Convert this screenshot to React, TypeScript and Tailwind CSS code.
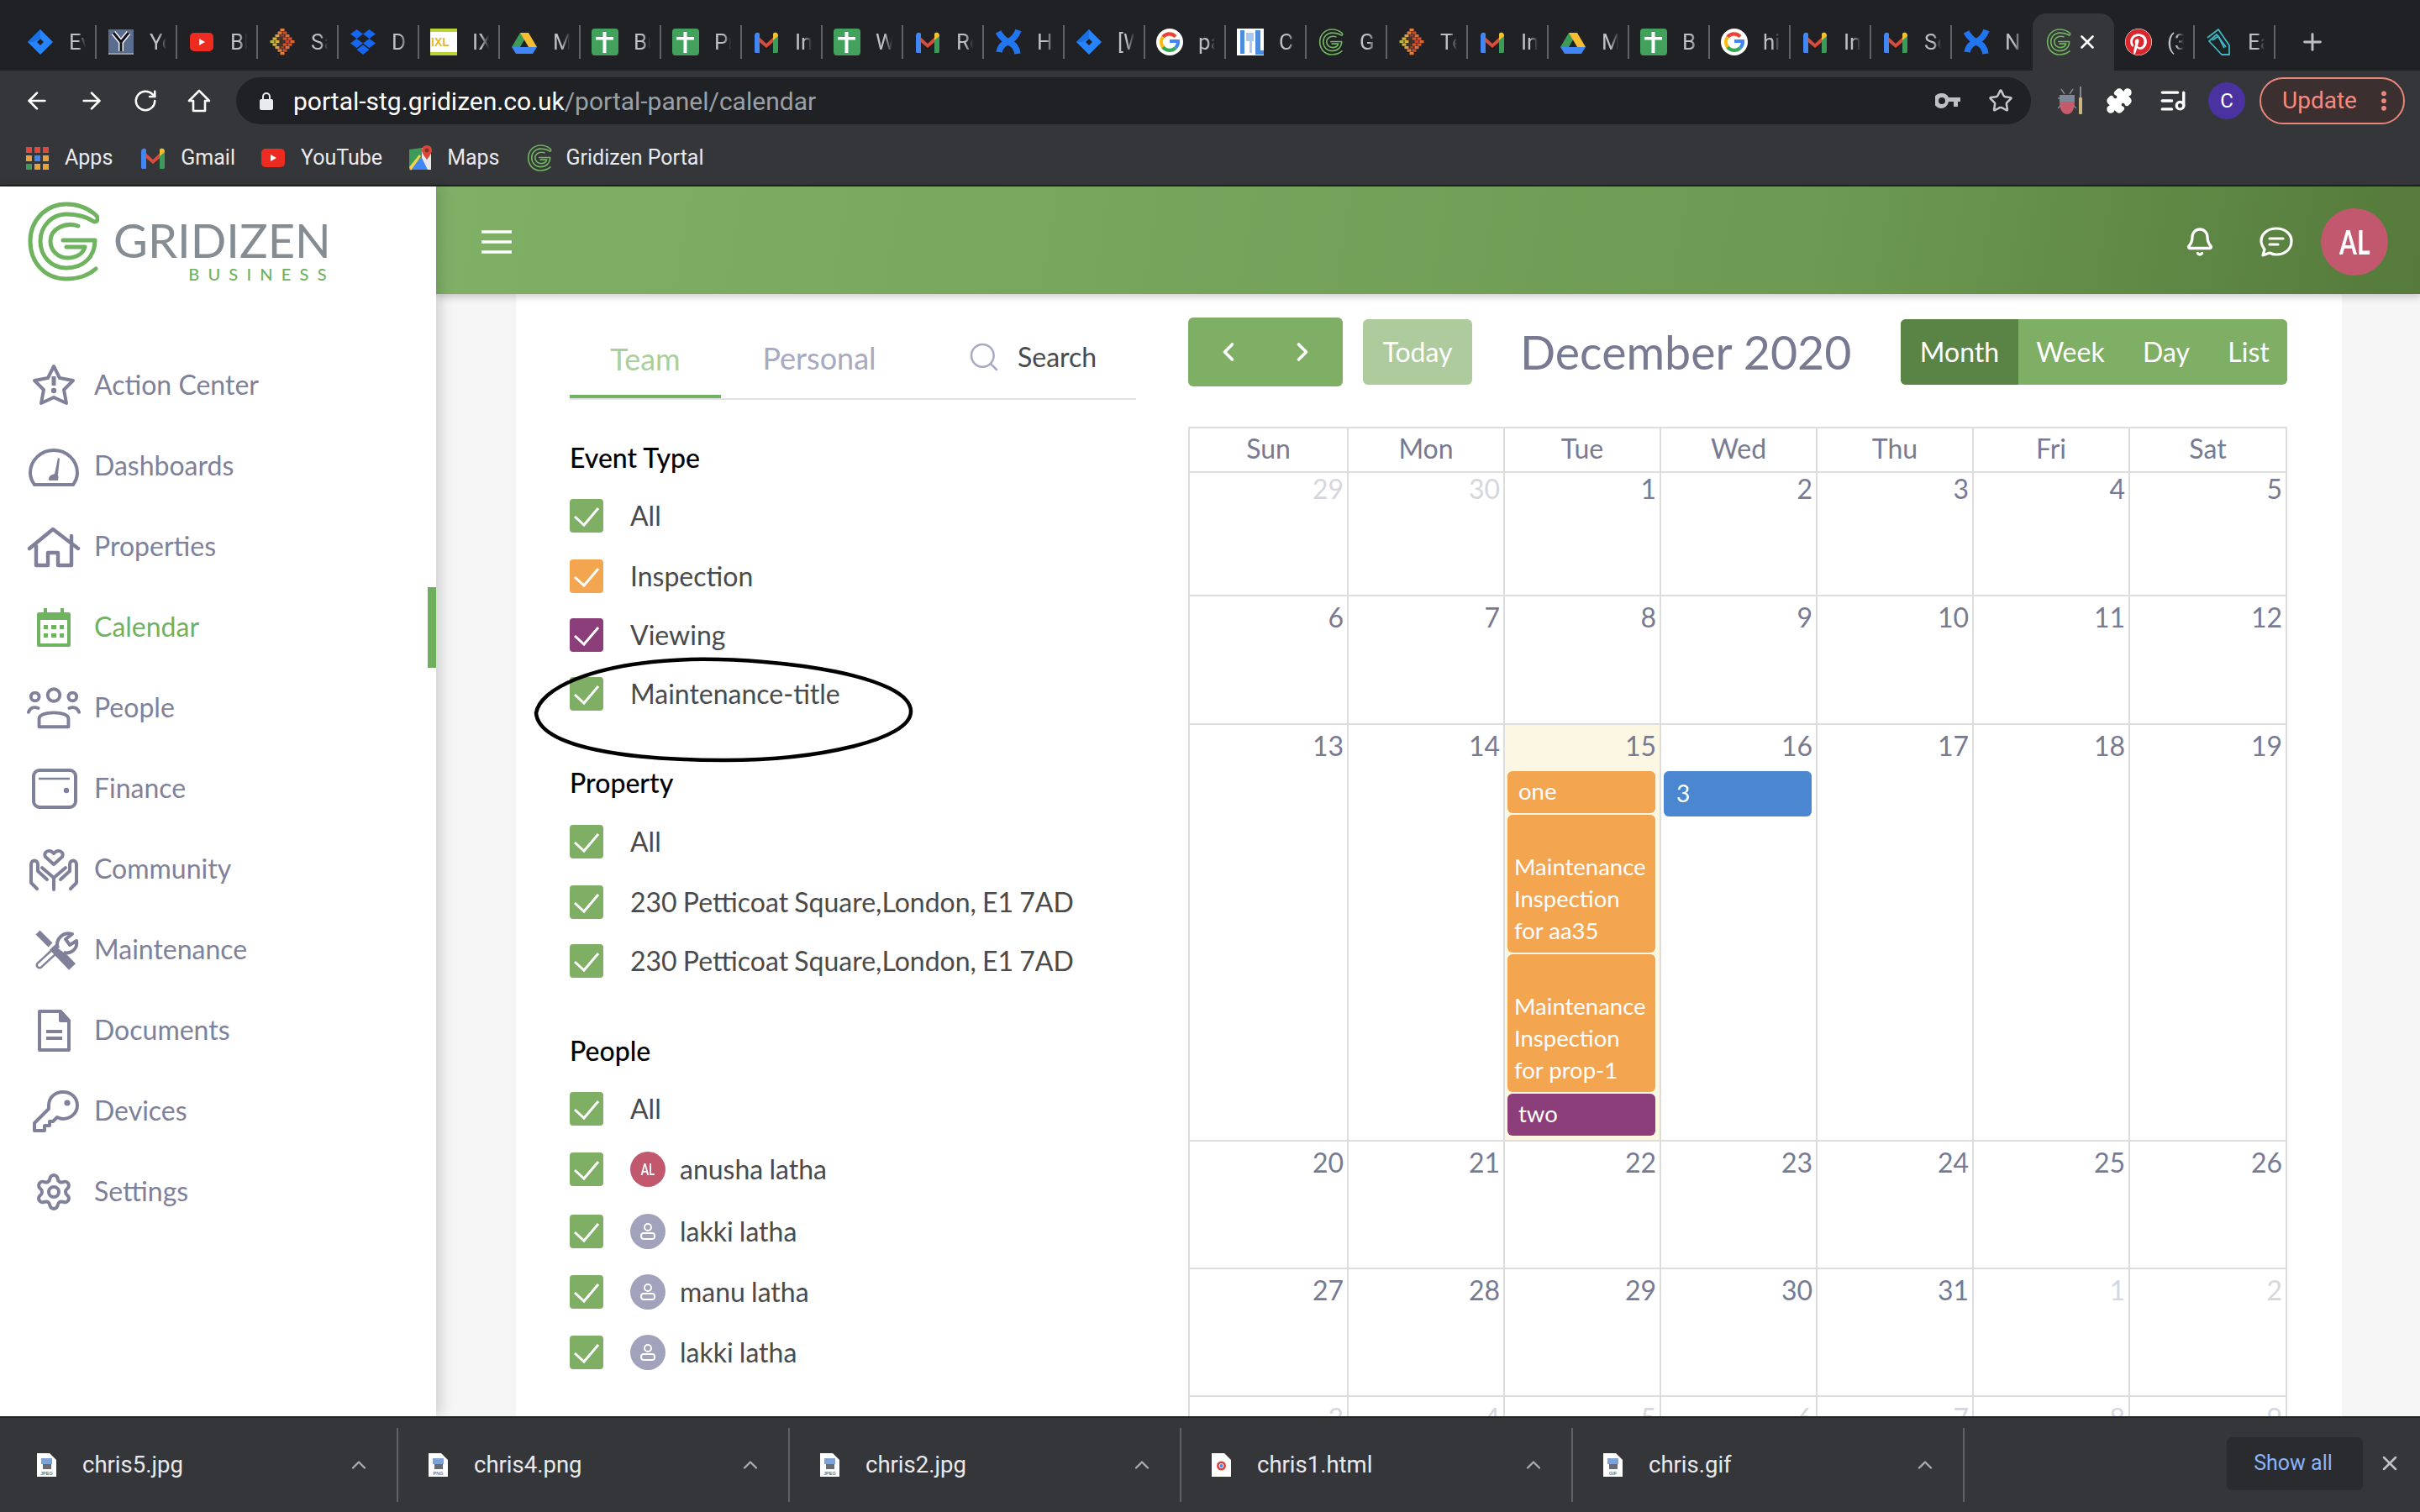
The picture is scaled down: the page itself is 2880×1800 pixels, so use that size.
import { ArrowLeft, ArrowRight, Bell, ChevronLeft, ChevronRight, ChevronUp, ListMusic, MoreVertical, Plus, Puzzle, RotateCw, Search, Settings, Star, X } from 'lucide-react';
import type { ReactNode } from 'react';
import { FaPinterest } from 'react-icons/fa';

const lato = 'font-["Lato","Liberation_Sans",sans-serif]';
const roboto = 'font-["Roboto","Liberation_Sans",sans-serif]';

// --- favicons ---

function GridizenMark({ className, color = '#6fb25f' }: { className: string; color?: string }) {
  return (
    <svg viewBox="0 0 85 95" className={className} fill="none" stroke={color} strokeWidth="5" strokeLinecap="round" strokeLinejoin="round">
      <path d="M81 80C72 88 60 92 46 92C20 92 3 72 3 47C3 22 22 3 46 3C60 3 72 8 81 16C85 20 83 24 79 24C70 18 58 15 46 15C28 15 15 30 15 47C15 65 28 79 46 79C66 79 80 66 80 46H42" />
      <path d="M60 29C45 24 27 32 27 47C27 59 37 67 47 67C58 67 66 62 68 54H46" />
    </svg>
  );
}

function Jira() {
  return (
    <svg viewBox="0 0 32 32" className="h-8 w-8">
      <path fillRule="evenodd" d="M16 1L31 16L16 31L1 16ZM16 12L12 16L16 20L20 16Z" fill="#2684ff" />
      <path d="M16 12L16 1L1 16L7 16Z" fill="#1c6fe3" />
    </svg>
  );
}

function YBox() {
  return (
    <svg viewBox="0 0 32 32" className="h-8 w-8">
      <rect x="1" y="1" width="30" height="30" fill="#5a6d8f" />
      <rect x="1" y="29" width="30" height="2" fill="#9a9a9a" />
      <path d="M7 5L16 16V27M25 5L16 16" stroke="#f2f2f2" strokeWidth="6" fill="none" />
      <path d="M7 5L16 16V27M25 5L16 16" stroke="#10121e" strokeWidth="3" fill="none" />
    </svg>
  );
}

function YouTube() {
  return (
    <svg viewBox="0 0 32 32" className="h-8 w-8">
      <rect x="2" y="5" width="28" height="22" rx="5" fill="#ed2b21" />
      <path d="M13 12L20 16L13 20Z" fill="#fff" />
    </svg>
  );
}

const sigmaRows = [
  ['#e67e3c'],
  ['#e67e3c', '#c9502f'],
  ['#d9a03c', '#8c3a2a', '#e06a32'],
  ['#d6b23f', '#4b3b2e', '#d8552c', '#d8552c'],
  ['#b7b63e', '#d6b23f', '#3b3230', '#c9402a', '#e0652f'],
  ['#d6b23f', '#4b3b2e', '#d8552c', '#d8552c'],
  ['#d9a03c', '#8c3a2a', '#e06a32'],
  ['#e67e3c', '#c9502f'],
  ['#e67e3c'],
];

function Sigma() {
  return (
    <svg viewBox="0 0 32 32" className="h-8 w-8">
      {sigmaRows.map((row, r) =>
        row.map((c, i) => (
          <rect key={`${r}-${i}`} x={16 - row.length * 3 + i * 6 + 0.5} y={r * 3.5} width="5" height="3.2" fill={c} />
        )),
      )}
    </svg>
  );
}

function Dropbox() {
  return (
    <svg viewBox="0 0 32 32" className="h-8 w-8" fill="#1566f0">
      <path d="M8.5 1L16 6.5L8.5 12L1 6.5ZM23.5 1L31 6.5L23.5 12L16 6.5ZM8.5 12L16 17.5L8.5 23L1 17.5ZM23.5 12L31 17.5L23.5 23L16 17.5ZM16 19.5L23.5 25L16 31L8.5 25Z" />
    </svg>
  );
}

function Ixl() {
  return (
    <svg viewBox="0 0 32 32" className="h-8 w-8">
      <rect width="32" height="32" fill="#fff" />
      <rect width="32" height="4" fill="#b8d436" />
      <rect y="28" width="32" height="4" fill="#b8d436" />
      <text x="1" y="21" fontSize="14" fontWeight="700" fontFamily="Liberation Sans" fill="#e5b92e">IXL</text>
    </svg>
  );
}

function Drive() {
  return (
    <svg viewBox="0 0 32 32" className="h-8 w-8">
      <path d="M11 3H21L11 20H1Z" fill="#3d9a58" transform="translate(0 2)" />
      <path d="M11 5H21L31 22H21Z" fill="#f5bd2f" />
      <path d="M6 22H31L26 30H6L1 22Z" fill="#4285f4" />
    </svg>
  );
}

function Sheets() {
  return (
    <svg viewBox="0 0 32 32" className="h-8 w-8">
      <rect width="32" height="32" rx="4" fill="#43a15e" />
      <rect x="13.5" y="4" width="4" height="25" fill="#fff" />
      <rect x="5" y="10" width="21" height="3.5" fill="#fff" />
    </svg>
  );
}

function Gmail() {
  return (
    <svg viewBox="0 0 32 32" className="h-8 w-8">
      <path d="M3 6L16 18L29 6V12L16 23L3 12Z" fill="#dd4b3d" />
      <path d="M2 9C2 4 6 4 8 6V29H3.5C2.5 29 2 28 2 27Z" fill="#4285f4" />
      <path d="M24 29V6C26 4 30 4 30 9V27C30 28 29.5 29 28.5 29Z" fill="#3d9a58" />
      <path d="M24 6C26 4 30 4 30 9L24 14Z" fill="#f5bd2f" />
    </svg>
  );
}

function Confluence() {
  return (
    <svg viewBox="0 0 32 32" className="h-8 w-8" fill="none" stroke="#2176f0" strokeWidth="7.5">
      <path d="M4 4C8 11 13 15 18 17C23 19 26 23 27 30" />
      <path d="M28 2C25 10 20 14 15 16C10 18 6 22 5 28" />
    </svg>
  );
}

function Google() {
  return (
    <svg viewBox="0 0 32 32" className="h-8 w-8">
      <circle cx="16" cy="16" r="16" fill="#fff" />
      <g fill="none" strokeWidth="4.2">
        <path d="M23 9.6A10 10 0 0 0 8 10" stroke="#ea4335" />
        <path d="M8 10A10 10 0 0 0 8 22" stroke="#fbbc05" />
        <path d="M8 22A10 10 0 0 0 23 23" stroke="#34a853" />
        <path d="M23 23A10 10 0 0 0 26 15H16" stroke="#4285f4" />
      </g>
    </svg>
  );
}

function CBox() {
  return (
    <svg viewBox="0 0 32 32" className="h-8 w-8">
      <rect width="32" height="32" fill="#fff" />
      <path d="M4 2H9V30H4ZM22 2H28V26H32V31H22Z" fill="#4a8de0" />
      <rect x="11" y="5" width="9" height="10" fill="#a9c9f0" />
      <rect x="15" y="15" width="3" height="14" fill="#a9c9f0" />
    </svg>
  );
}

function Pinterest() {
  return (
    <span className="flex h-8 w-8 items-center justify-center rounded-full bg-white">
      <FaPinterest className="h-8 w-8 text-[#d9272e]" />
    </span>
  );
}

function Clip() {
  return (
    <svg viewBox="0 0 32 32" className="h-8 w-8" fill="none" stroke="#3fb6c4" strokeWidth="1.8" strokeLinejoin="round">
      <path d="M2 11L15 1L28 20V31H19L4 15L13 7L24 22" />
      <path d="M8 14L15 9L22 23" />
    </svg>
  );
}

function Maps() {
  return (
    <svg viewBox="0 0 32 32" className="h-8 w-8">
      <path d="M2 6L17 4V30L2 30Z" fill="#3d9a58" />
      <path d="M2 30L17 15L28 30Z" fill="#4285f4" />
      <path d="M2 27L14 12L16 14L4 31Z" fill="#f5d547" />
      <path d="M17 4L28 6V30H24L17 16Z" fill="#e8e8e8" />
      <path d="M23 1C19 1 17 4 17 7C17 11 23 18 23 18C23 18 29 11 29 7C29 4 27 1 23 1Z" fill="#d6493a" />
      <circle cx="23" cy="7" r="2.4" fill="#8e2a20" />
    </svg>
  );
}

function Apps() {
  const colors = ['#e2473d', '#e2473d', '#e2473d', '#e9a13b', '#4285f4', '#e9a13b', '#3d9a58', '#e9a13b', '#e9a13b'];
  return (
    <span className="grid grid-cols-[7px_7px_7px] gap-[3px]">
      {colors.map((c, i) => (
        <svg key={i} viewBox="0 0 7 7" className="h-[7px] w-[7px]"><rect width="7" height="7" fill={c} /></svg>
      ))}
    </span>
  );
}

function gz() {
  return <GridizenMark className="h-8 w-8" />;
}

const tabs: { icon: () => ReactNode; label: string }[] = [
  { icon: Jira, label: 'Ev' },
  { icon: YBox, label: 'Yo' },
  { icon: YouTube, label: 'Bl' },
  { icon: Sigma, label: 'Sa' },
  { icon: Dropbox, label: 'D' },
  { icon: Ixl, label: 'IX' },
  { icon: Drive, label: 'M' },
  { icon: Sheets, label: 'Bu' },
  { icon: Sheets, label: 'Pr' },
  { icon: Gmail, label: 'In' },
  { icon: Sheets, label: 'W' },
  { icon: Gmail, label: 'Re' },
  { icon: Confluence, label: 'H' },
  { icon: Jira, label: '[W' },
  { icon: Google, label: 'pa' },
  { icon: CBox, label: 'C' },
  { icon: gz, label: 'G' },
  { icon: Sigma, label: 'Te' },
  { icon: Gmail, label: 'In' },
  { icon: Drive, label: 'M' },
  { icon: Sheets, label: 'B' },
  { icon: Google, label: 'hi' },
  { icon: Gmail, label: 'In' },
  { icon: Gmail, label: 'Se' },
];

function Tab({ icon, label, sep = true }: { icon: () => ReactNode; label: string; sep?: boolean }) {
  return (
    <div className={`flex h-[40px] w-[96px] shrink-0 items-center gap-[18px] pl-[13px] ${sep ? 'border-r-2 border-[#5f6368]' : ''}`}>
      {icon()}
      <span className="w-[20px] overflow-hidden text-[26px] whitespace-nowrap text-[#bdc1c6] [mask-image:linear-gradient(to_right,black_55%,transparent)]">{label}</span>
    </div>
  );
}

function BrowserChrome() {
  return (
    <div className={`${roboto} shrink-0 bg-[#35363a]`}>
      <div className="flex h-[84px] items-end bg-[#202124] pl-[19px]">
        <div className="flex h-[68px] items-center">
          {tabs.map((t, i) => (
            <Tab key={i} {...t} />
          ))}
          <Tab icon={Confluence} label="N" sep={false} />
          <div className="flex h-[68px] w-[97px] shrink-0 items-center gap-[5px] rounded-t-[16px] bg-[#35363a] pl-[15px]">
            <GridizenMark className="h-8 w-8" />
            <X size={26} strokeWidth={2.4} className="text-white" />
          </div>
          <Tab icon={Pinterest} label="(3" />
          <Tab icon={Clip} label="Ea" />
          <Plus size={32} strokeWidth={2.2} className="ml-[28px] text-[#bdc1c6]" />
        </div>
      </div>
      <div className="flex h-[72px] items-center pl-[28px]">
        <ArrowLeft size={32} strokeWidth={2} className="text-white" />
        <ArrowRight size={32} strokeWidth={2} className="ml-[33px] text-white" />
        <RotateCw size={30} strokeWidth={2} className="ml-[33px] text-white" />
        <svg viewBox="0 0 30 30" className="ml-[34px] h-[30px] w-[30px]" fill="none" stroke="#fff" strokeWidth="2.6" strokeLinejoin="round">
          <path d="M15 3L27 15H22V27H8V15H3Z" />
        </svg>
        <div className="ml-[29px] flex h-[56px] w-[2136px] items-center rounded-full bg-[#202124] pl-[28px]">
          <svg viewBox="0 0 16 22" className="h-[22px] w-[16px]">
            <rect y="9" width="16" height="13" rx="2" fill="#e8eaed" />
            <path d="M4 10V6a4 4 0 0 1 8 0v4" stroke="#e8eaed" strokeWidth="2" fill="none" />
          </svg>
          <span className="ml-[24px] text-[30px] text-white">
            portal-stg.gridizen.co.uk<span className="text-[#9aa0a6]">/portal-panel/calendar</span>
          </span>
          <svg viewBox="0 0 30 20" className="ml-auto h-[20px] w-[30px]" fill="#bdc1c6">
            <path fillRule="evenodd" d="M8 1a9 9 0 0 1 8 5h14v5h-3v6h-5v-6h-6a9 9 0 1 1-8-10zM8 6a4 4 0 1 0 0 8a4 4 0 0 0 0-8z" />
          </svg>
          <Star size={30} strokeWidth={2} className="mr-[21px] ml-[33px] text-[#c4c7c5]" />
        </div>
        <svg viewBox="0 0 32 34" className="ml-[32px] h-[34px] w-[32px]">
          <path d="M2 10H20V20H2Z" fill="#7c8797" />
          <path d="M2 18H20C20 28 16 33 11 33C6 33 2 28 2 18Z" fill="#c65b6b" />
          <path d="M4 3L8 9M18 3L14 9M0 14H3M0 26L4 22M22 26L18 22" stroke="#8a8a8a" strokeWidth="1.4" />
          <rect x="26" y="0" width="2" height="13" fill="#8a8a8a" />
          <rect x="25" y="13" width="4" height="20" rx="1" fill="#c9b482" />
        </svg>
        <Puzzle size={32} className="ml-[25px] fill-white text-white" />
        <ListMusic size={34} strokeWidth={2.4} className="ml-[31px] text-white" />
        <span className="ml-[25px] flex h-[44px] w-[44px] items-center justify-center rounded-full bg-[#4a32a0] text-[24px] text-white">C</span>
        <div className="ml-[17px] flex h-[56px] w-[173px] items-center rounded-full border-2 border-[#e8877a] bg-[#3c2f30] pl-[25px] text-[28px] text-[#f28b82]">
          Update
          <MoreVertical size={30} strokeWidth={2.6} className="ml-[17px]" />
        </div>
      </div>
      <div className="flex h-[66px] items-center border-b-2 border-[#1f2023] pl-[31px] text-[25px] text-[#e8eaed]">
        <Apps />
        <span className="ml-[19px]">Apps</span>
        <span className="ml-[32px]"><Gmail /></span>
        <span className="ml-[17px]">Gmail</span>
        <span className="ml-[29px]"><YouTube /></span>
        <span className="ml-[17px]">YouTube</span>
        <span className="ml-[30px]"><Maps /></span>
        <span className="ml-[15px]">Maps</span>
        <span className="ml-[31px]"><GridizenMark className="h-8 w-8" /></span>
        <span className="ml-[16px]">Gridizen Portal</span>
      </div>
    </div>
  );
}

// --- sidebar ---

const navIcons: Record<string, ReactNode> = {
  'Action Center': (
    <svg viewBox="0 0 64 52" className="h-[52px] w-[64px]" fill="none" stroke="currentColor" strokeWidth="4" strokeLinejoin="round">
      <path d="M32 3L39 17L55 20L44 31L47 47L32 40L17 47L20 31L9 20L25 17Z" />
      <path d="M32 15V26" strokeWidth="5" />
      <circle cx="32" cy="32" r="3.2" fill="currentColor" stroke="none" />
    </svg>
  ),
  Dashboards: (
    <svg viewBox="0 0 64 52" className="h-[52px] w-[64px]" fill="none" stroke="currentColor" strokeWidth="4" strokeLinejoin="round">
      <path d="M9 48Q4 41 4 34A28 27 0 0 1 60 34Q60 41 55 48Z" />
      <path d="M37 16L33 35L28 37Q24 42 27 43H37Q38 40 37 36L39 17Z" fill="currentColor" stroke="none" />
    </svg>
  ),
  Properties: (
    <svg viewBox="0 0 64 52" className="h-[52px] w-[64px]" fill="none" stroke="currentColor" strokeWidth="4.4" strokeLinejoin="round" strokeLinecap="round">
      <path d="M3 28L31 5L61 28" />
      <path d="M11 25V48H25V33H37V48H53V25" />
      <path d="M53 13V22" />
    </svg>
  ),
  Calendar: (
    <svg viewBox="0 0 64 52" className="h-[52px] w-[64px]" fill="currentColor">
      <path fillRule="evenodd" d="M14 8H50Q52 8 52 10V47Q52 49 50 49H14Q12 49 12 47V10Q12 8 14 8ZM16 17V45H48V17Z" />
      <rect x="20" y="3" width="4" height="8" />
      <rect x="40" y="3" width="4" height="8" />
      <rect x="20" y="23" width="5" height="5" />
      <rect x="29" y="23" width="6" height="5" />
      <rect x="39" y="23" width="5" height="5" />
      <rect x="20" y="33" width="5" height="5" />
      <rect x="29" y="33" width="6" height="5" />
      <rect x="39" y="33" width="5" height="5" />
    </svg>
  ),
  People: (
    <svg viewBox="0 0 66 50" className="h-[50px] w-[66px]" fill="none" stroke="currentColor" strokeWidth="4" strokeLinecap="round" strokeLinejoin="round">
      <circle cx="10" cy="11" r="5" />
      <circle cx="33" cy="9" r="7.5" />
      <circle cx="56" cy="11" r="5" />
      <path d="M15 48V38C15 28 51 28 51 38V48Z" />
      <path d="M2 30C4 24 9 23 14 25M64 30C62 24 57 23 52 25" />
    </svg>
  ),
  Finance: (
    <svg viewBox="0 0 64 52" className="h-[52px] w-[64px]" fill="none" stroke="currentColor" strokeWidth="4">
      <rect x="8" y="4" width="50" height="44" rx="7" />
      <path d="M14 14H51" strokeWidth="2.5" />
      <circle cx="47" cy="28" r="3.2" fill="currentColor" stroke="none" />
    </svg>
  ),
  Community: (
    <svg viewBox="0 0 64 52" className="h-[52px] w-[64px]" fill="none" stroke="currentColor" strokeWidth="4" strokeLinecap="round" strokeLinejoin="round">
      <path d="M32 20L22 11C19 5 27 1 32 7C37 1 45 5 42 11Z" />
      <path d="M12 49L5 42V20C5 14 13 14 13 20V28L24 38M52 49L59 42V20C59 14 51 14 51 20V28L40 38" />
      <path d="M18 24L32 36L46 24M32 36V50" />
    </svg>
  ),
  Maintenance: (
    <svg viewBox="0 0 64 52" className="h-[52px] w-[64px]" fill="none" stroke="currentColor" strokeLinejoin="round">
      <path d="M15 44L40 21" strokeWidth="9" strokeLinecap="round" />
      <path d="M15 44L40 21" strokeWidth="4" stroke="#fff" strokeLinecap="round" />
      <path d="M13 5L28 20" strokeWidth="7" />
      <path d="M31 22L54 46" strokeWidth="11" />
      <path d="M37 24C33 13 43 4 54 7L46 13L51 20L59 15C61 25 52 31 44 29" strokeWidth="4" fill="#fff" />
    </svg>
  ),
  Documents: (
    <svg viewBox="0 0 64 52" className="h-[52px] w-[64px]" fill="none" stroke="currentColor" strokeWidth="4" strokeLinejoin="round">
      <path d="M15 3H40L50 14V49H15Z" />
      <path d="M40 3V14H50Z" fill="currentColor" />
      <path d="M23 27H42M23 35H42" />
    </svg>
  ),
  Devices: (
    <svg viewBox="0 0 64 52" className="h-[52px] w-[64px]" fill="none" stroke="currentColor" strokeWidth="4" strokeLinejoin="round">
      <path d="M43 3C53 3 60 10 60 19C60 28 52 35 43 35C40 35 38 34 36 33L31 38H27V43H21V49H9V40L26 23C26 21 26 20 26 19C26 10 33 3 43 3Z" />
      <circle cx="48" cy="16" r="3.6" fill="currentColor" stroke="none" />
    </svg>
  ),
  Settings: <Settings size={48} strokeWidth={2} />,
};

const navItems = ['Action Center', 'Dashboards', 'Properties', 'Calendar', 'People', 'Finance', 'Community', 'Maintenance', 'Documents', 'Devices', 'Settings'];

function Sidebar() {
  return (
    <aside className="relative z-20 flex w-[519px] shrink-0 flex-col bg-white shadow-[6px_0_14px_rgba(0,0,0,0.14)]">
      <div className="flex h-[189px] items-start pl-[33px] pt-[18px]">
        <GridizenMark className="h-[95px] w-[85px]" />
        <div className="ml-[17px] flex flex-col items-end pt-[24px]">
          <span className={`${lato} text-[56px] leading-[44px] text-[#858d93]`}>GRIDIZEN</span>
          <span className={`${lato} mt-[8px] mr-[-5px] text-[20px] leading-[20px] font-medium tracking-[10.2px] text-[#6fb25f]`}>BUSINESS</span>
        </div>
      </div>
      <nav className="flex flex-col">
        {navItems.map((name) => {
          const active = name === 'Calendar';
          return (
            <div
              key={name}
              className={`flex h-[96px] items-center pl-[32px] border-r-10 ${active ? 'border-[#6fae5c] text-[#6fb25f]' : 'border-transparent text-[#7e8199]'}`}
            >
              <span className="flex w-[64px] justify-center">{navIcons[name]}</span>
              <span className={`${lato} ml-[16px] pb-[3px] text-[32px]`}>{name}</span>
            </div>
          );
        })}
      </nav>
    </aside>
  );
}

// --- filter panel ---

function Check({ color = 'bg-[#7fae65]' }: { color?: string }) {
  return (
    <span className={`flex h-10 w-10 shrink-0 rounded-[4px] ${color}`}>
      <svg viewBox="0 0 40 40" className="h-10 w-10" fill="none" stroke="#fff" strokeWidth="3">
        <path d="M6 21L17 31L34 11" />
      </svg>
    </span>
  );
}

function UserDot() {
  return (
    <span className="flex h-[42px] w-[42px] shrink-0 items-center justify-center rounded-full bg-[#a0a3bb]">
      <svg viewBox="0 0 20 22" className="h-[22px] w-[20px]" fill="none" stroke="#fff" strokeWidth="2">
        <circle cx="10" cy="6" r="4" />
        <rect x="2" y="13" width="16" height="7" rx="3" />
      </svg>
    </span>
  );
}

function FilterRow({ label, mt, color, avatar }: { label: string; mt: string; color?: string; avatar?: ReactNode }) {
  return (
    <div className={`flex h-10 items-center gap-[32px] text-[32px] [word-spacing:-1px] whitespace-nowrap text-[#4a4a4a] ${mt}`}>
      <Check color={color} />
      {avatar ? (
        <span className="flex items-center gap-[17px]">
          {avatar}
          {label}
        </span>
      ) : (
        label
      )}
    </div>
  );
}

function FilterPanel() {
  return (
    <div className={`${lato} ml-[64px] w-[674px] shrink-0`}>
      <div className="flex h-[126px] items-end border-b-2 border-[#e2e2e2]">
        <div className="flex h-[90px] w-[180px] items-center justify-center border-b-4 border-[#72b262] text-[36px] text-[#a9d09c]">Team</div>
        <div className="flex h-[90px] w-[234px] items-center justify-center pb-[6px] text-[36px] text-[#a7aac2]">Personal</div>
        <div className="flex h-[90px] items-center gap-[20px] pl-[59px] pb-[8px] text-[32px] text-[#4a4a4a]">
          <Search size={40} strokeWidth={1.5} className="text-[#a7aac2]" />
          Search
        </div>
      </div>

      <h3 className="mt-[49px] h-10 text-[32px] leading-10 font-medium text-black">Event Type</h3>
      <FilterRow label="All" mt="mt-[29px]" />
      <FilterRow label="Inspection" mt="mt-[32px]" color="bg-[#f4a54f]" />
      <FilterRow label="Viewing" mt="mt-[30px]" color="bg-[#8b3e7a]" />
      <FilterRow label="Maintenance-title" mt="mt-[30px]" />

      <h3 className="mt-[66px] h-10 text-[32px] leading-10 font-medium text-black">Property</h3>
      <FilterRow label="All" mt="mt-[30px]" />
      <FilterRow label="230 Petticoat Square,London, E1 7AD" mt="mt-[32px]" />
      <FilterRow label="230 Petticoat Square,London, E1 7AD" mt="mt-[30px]" />

      <h3 className="mt-[67px] h-10 text-[32px] leading-10 font-medium text-black">People</h3>
      <FilterRow label="All" mt="mt-[29px]" />
      <FilterRow
        label="anusha latha"
        mt="mt-[32px]"
        avatar={
          <span className="flex h-[42px] w-[42px] shrink-0 items-center justify-center rounded-full bg-[#c2586e] text-[18px] font-bold text-white">
            <span className="scale-x-75">AL</span>
          </span>
        }
      />
      <FilterRow label="lakki latha" mt="mt-[34px]" avatar={<UserDot />} />
      <FilterRow label="manu latha" mt="mt-[32px]" avatar={<UserDot />} />
      <FilterRow label="lakki latha" mt="mt-[32px]" avatar={<UserDot />} />
    </div>
  );
}

// --- calendar ---

const weekdays = ['Sun', 'Mon', 'Tue', 'Wed', 'Thu', 'Fri', 'Sat'];

const weeks: { days: (number | string)[]; h: string }[] = [
  { days: ['29', '30', 1, 2, 3, 4, 5], h: 'h-[153px]' },
  { days: [6, 7, 8, 9, 10, 11, 12], h: 'h-[153px]' },
  { days: [13, 14, 15, 16, 17, 18, 19], h: 'h-[496px]' },
  { days: [20, 21, 22, 23, 24, 25, 26], h: 'h-[152px]' },
  { days: [27, 28, 29, 30, 31, '1', '2'], h: 'h-[152px]' },
  { days: ['3', '4', '5', '6', '7', '8', '9'], h: 'h-[152px]' },
];

function TodayEvents() {
  return (
    <div className="mt-[11px] mr-[5px] ml-[3px] flex flex-col gap-[2px] text-[27.5px] text-white">
      <div className="flex h-[50px] items-center rounded-[6px] bg-[#f4a54f] pb-[2px] pl-[13px]">one</div>
      <div className="h-[164px] rounded-[6px] bg-[#f4a54f] pt-[43px] pl-[8px] leading-[38px]">
        Maintenance<br />Inspection<br />for aa35
      </div>
      <div className="h-[164px] rounded-[6px] bg-[#f4a54f] pt-[43px] pl-[8px] leading-[38px]">
        Maintenance<br />Inspection<br />for prop-1
      </div>
      <div className="flex h-[50px] items-center rounded-[6px] bg-[#8b3e7a] pb-[2px] pl-[13px]">two</div>
    </div>
  );
}

function Calendar() {
  return (
    <div className={`${lato} ml-[62px] w-[1308px] shrink-0 pt-[28px]`}>
      <div className="flex h-[82px] items-center">
        <div className="flex h-[82px] w-[184px] items-center justify-between rounded-[6px] bg-[#7fae65] px-[30px] text-white">
          <ChevronLeft size={36} strokeWidth={2.4} />
          <ChevronRight size={36} strokeWidth={2.4} />
        </div>
        <div className="ml-[24px] flex h-[78px] w-[130px] items-center justify-center rounded-[6px] bg-[#adcb9d] text-[32px] text-white">Today</div>
        <h1 className="ml-[57px] text-[55.5px] text-[#787a92]">December 2020</h1>
        <div className="ml-auto flex h-[78px] w-[460px] overflow-hidden rounded-[6px] bg-[#7fae65] text-[32px] text-white">
          <span className="flex w-[140px] items-center justify-center bg-[#5a8445]">Month</span>
          <span className="flex w-[124px] items-center justify-center">Week</span>
          <span className="flex w-[104px] items-center justify-center">Day</span>
          <span className="flex w-[92px] items-center justify-center">List</span>
        </div>
      </div>

      <div className="mt-[48px] border-t-2 border-l-2 border-[#dddddd]">
        <div className="grid h-[47px] grid-cols-[189px_repeat(5,186px)_187px]">
          {weekdays.map((d) => (
            <div key={d} className="flex items-center justify-center border-r-2 border-b-2 border-[#dddddd] pb-[3px] text-[32px] text-[#787a92]">{d}</div>
          ))}
        </div>
        {weeks.map((week, w) => (
          <div key={w} className={`grid grid-cols-[189px_repeat(5,186px)_187px] ${week.h}`}>
            {week.days.map((day, i) => {
              const muted = typeof day === 'string';
              const today = day === 15;
              return (
                <div key={i} className={`border-r-2 border-b-2 border-[#dddddd] ${today ? 'bg-[#fbf7e3]' : ''}`}>
                  <div className={`pt-[6px] pr-[4px] text-right text-[32px] leading-[38px] ${muted ? 'text-[#d5d6de]' : 'text-[#787a92]'}`}>{day}</div>
                  {today && <TodayEvents />}
                  {day === 16 && (
                    <div className="mt-[11px] mr-[5px] ml-[3px] flex h-[54px] items-center rounded-[6px] bg-[#4a87d0] pb-[2px] pl-[15px] text-[28px] text-white">3</div>
                  )}
                </div>
              );
            })}
          </div>
        ))}
      </div>
    </div>
  );
}

// --- download bar ---

function FilePage({ kind }: { kind: string }) {
  return (
    <svg viewBox="0 0 23 28" className="h-[28px] w-[23px] shrink-0">
      <path d="M0 0H15L23 8V28H0Z" fill="#fff" />
      {kind === 'HTML' ? (
        <>
          <circle cx="11.5" cy="15" r="5.5" fill="#d9473b" />
          <circle cx="11.5" cy="15" r="2.5" fill="#4285f4" stroke="#fff" />
        </>
      ) : (
        <>
          <rect x="5" y="6" width="13" height="7" fill="#7da3d6" />
          <rect x="7" y="13" width="10" height="6" fill="#6b6b72" />
          <text x="11.5" y="26" fontSize="5.5" textAnchor="middle" fontFamily="Liberation Sans" fill="#333">{kind}</text>
        </>
      )}
    </svg>
  );
}

const downloads = [
  { name: 'chris5.jpg', kind: 'JPEG' },
  { name: 'chris4.png', kind: 'PNG' },
  { name: 'chris2.jpg', kind: 'JPEG' },
  { name: 'chris1.html', kind: 'HTML' },
  { name: 'chris.gif', kind: 'GIF' },
];

function DownloadBar() {
  return (
    <div className={`${roboto} relative z-30 flex h-[114px] shrink-0 items-center border-t-2 border-[#202124] bg-[#35363a] pl-[8px]`}>
      {downloads.map((d) => (
        <div key={d.name} className="flex h-[88px] w-[466px] items-center border-r-2 border-[#5f6368] pl-[36px]">
          <FilePage kind={d.kind} />
          <span className="ml-[31px] text-[27.5px] text-[#e8eaed]">{d.name}</span>
          <ChevronUp size={28} strokeWidth={2} className="mr-[31px] ml-auto text-[#a8abaf]" />
        </div>
      ))}
      <div className="mb-[4px] ml-[312px] flex h-[63px] w-[162px] items-center justify-center rounded-[6px] bg-[#2a2b2e] pr-[4px] text-[25px] text-[#8ab4f8]">Show all</div>
      <X size={28} strokeWidth={2.2} className="mb-[4px] ml-[18px] text-[#bdc1c6]" />
    </div>
  );
}

export default function App() {
  return (
    <div className="relative flex h-screen w-full flex-col overflow-hidden bg-white">
      <BrowserChrome />
      <div className="flex min-h-0 flex-1">
        <Sidebar />
        <div className="flex min-w-0 flex-1 flex-col">
          <header className="relative z-10 flex h-[128px] shrink-0 items-center bg-[linear-gradient(100deg,#80b066_0%,#6c9a52_70%,#557a3b_100%)] pt-[4px] pr-[38px] pl-[54px] text-white shadow-[0_4px_8px_rgba(0,0,0,0.18)]">
            <svg viewBox="0 0 36 28" className="h-[28px] w-[36px]" stroke="#fff" strokeWidth="3.6">
              <path d="M0 2H36M0 14H36M0 26H36" />
            </svg>
            <Bell size={36} strokeWidth={2.2} className="ml-auto" />
            <svg viewBox="0 0 40 36" className="ml-[53px] h-[36px] w-[40px]" fill="none" stroke="#fff" strokeWidth="3.2" strokeLinecap="round" strokeLinejoin="round">
              <path d="M20 2C9 2 2 9 2 17C2 21 4 24 6 27L4 34L12 31C14 32 17 33 20 33C31 33 38 26 38 17C38 9 31 2 20 2Z" />
              <path d="M12 14H28M12 21H22" />
            </svg>
            <div className="ml-[33px] flex h-[80px] w-[80px] items-center justify-center rounded-full bg-[#c2586e] text-[40px] font-bold">
              <span className={`${lato} scale-x-75`}>AL</span>
            </div>
          </header>
          <main className="min-h-0 flex-1 overflow-hidden bg-[#f5f5f5]">
            <div className="ml-[95px] flex h-full w-[2173px] bg-white">
              <FilterPanel />
              <Calendar />
            </div>
          </main>
        </div>
      </div>
      <DownloadBar />

      {/* hand-drawn annotation over the Maintenance-title row */}
      <svg viewBox="0 0 460 130" className="pointer-events-none absolute top-[781px] left-[632px] z-40 h-[130px] w-[460px]" fill="none" stroke="#000" strokeWidth="4.5">
        <path d="M6 68C10 40 70 8 190 4C300 2 452 24 452 66C452 100 340 124 230 124C120 124 10 110 6 68Z" />
      </svg>
    </div>
  );
}
